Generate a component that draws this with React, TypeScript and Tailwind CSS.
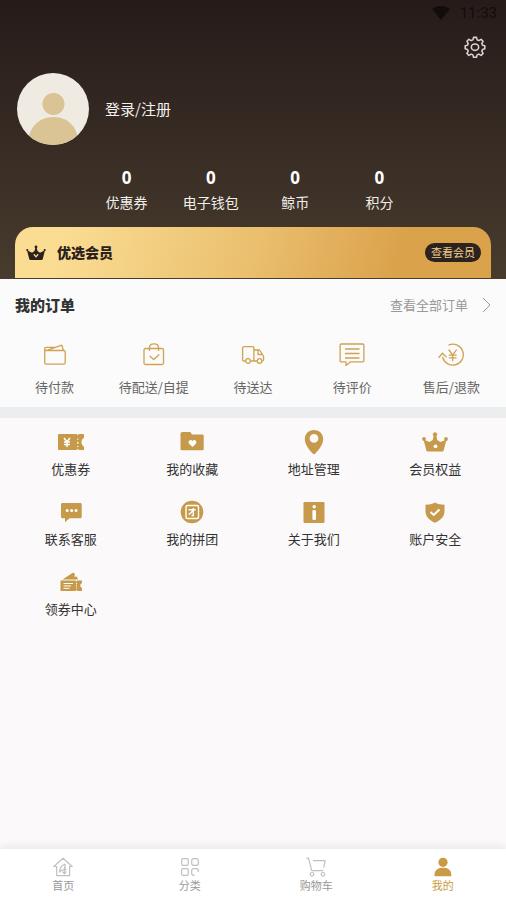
import React from 'react';

type IconProps = { className?: string };

type Entry = {
  label: string;
  icon: React.ReactNode;
};

const GearIcon: React.FC<IconProps> = ({ className }) => (
  <svg className={className} viewBox="0 0 24 24" fill="none" stroke="currentColor" strokeWidth="1.700" strokeLinejoin="round">
    <path d="M10.4 1.5h3.2l.7 2.7 1.9.8 2.4-1.4 2.2 2.2-1.4 2.4.8 1.9 2.5.6v3.2l-2.5.8-.8 1.9 1.4 2.4-2.2 2.2-2.4-1.4-1.9.8-.7 2.5h-3.2l-.7-2.5-1.9-.8-2.4 1.4L3.2 19l1.4-2.4-.8-1.9-2.5-.8v-3.2l2.5-.6.8-1.9-1.4-2.4 2.2-2.2L7.8 5l1.9-.8z" />
    <ellipse cx="12" cy="12.2" rx="4" ry="3.500" />
  </svg>
);

const CrownIcon: React.FC<IconProps> = ({ className }) => (
  <svg className={className} viewBox="0 0 26 20" fill="currentColor">
    <circle cx="13" cy="2.3" r="2.1" />
    <circle cx="2" cy="7" r="1.9" />
    <circle cx="24" cy="7" r="1.9" />
    <path d="M1.5 7.500l6 2.500L10.800 8l1.100-6h2.200l1.100 6 3.300 2 6-2.500-2.800 10.800c-.2.800-.6 1.200-1.300 1.200H5.600c-.7 0-1.100-.4-1.300-1.200z" />
    <circle cx="13.500" cy="14.300" r="1.900" fill="#fff" />
  </svg>
);

const MemberCrownIcon: React.FC<IconProps> = ({ className }) => (
  <svg className={className} viewBox="0 0 20 16" fill="currentColor">
    <circle cx="10" cy="2" r="1.400" />
    <circle cx="1.300" cy="5" r="1.100" />
    <circle cx="18.700" cy="5" r="1.100" />
    <path d="M1 5.300l5 2.400L8.500 6l1-4h1l1 4L14 7.700l5-2.400-2.300 8.900c-.2.600-.5.800-1.100.8H4.400c-.6 0-.9-.2-1.100-.8z" />
    <path d="M7.800 9.300l2.200 2.500 2.200-2.500" fill="none" stroke="#f4d48c" strokeWidth="1.300" />
  </svg>
);

const orders: Entry[] = [
  {
    label: '待付款',
    icon: (
      <svg className="h-6 w-6" viewBox="0 0 24 24" fill="none" stroke="currentColor" strokeWidth="1.300" strokeLinejoin="round">
        <path d="M1.700 6v13.700c0 1 .5 1.500 1.500 1.500h17.500c1 0 1.500-.5 1.500-1.500V9c0-1-.5-1.500-1.500-1.500H3.200c-1 0-1.500-.5-1.500-1.500s.5-1.700 1.500-1.700h9.500M4 7.300l14.800-5.100 1.600 5" />
      </svg>
    ),
  },
  {
    label: '待配送/自提',
    icon: (
      <svg className="h-6 w-6" viewBox="0 0 24 24" fill="none" stroke="currentColor" strokeWidth="1.300" strokeLinejoin="round">
        <rect x="2" y="5.500" width="19.500" height="16" rx="1.500" />
        <path d="M7.500 8V4.500C7.500 2 9 .8 12 .8s4.500 1.200 4.500 3.700V8M7.700 13l4 3.500 5.600-5" />
      </svg>
    ),
  },
  {
    label: '待送达',
    icon: (
      <svg className="h-6 w-6" viewBox="0 0 24 24" fill="none" stroke="currentColor" strokeWidth="1.300" strokeLinejoin="round">
        <path d="M4.500 18H2.800c-.8 0-1.200-.4-1.200-1.200V5c0-.9.500-1.400 1.400-1.400h8.500c.9 0 1.400.5 1.400 1.400v13H9.400M12.900 7h4.600c.8 0 1.300.3 1.700 1l3 4.500c.3.500.4.900.4 1.500v2.500c0 1-.5 1.500-1.500 1.500M16.200 18h-3.300M17 7v4.500h5" />
        <circle cx="7" cy="18" r="2.300" />
        <circle cx="18.600" cy="18" r="2.300" />
      </svg>
    ),
  },
  {
    label: '待评价',
    icon: (
      <svg className="h-6 w-[26px]" viewBox="0 0 26 24" fill="none" stroke="currentColor" strokeWidth="1.300" strokeLinejoin="round">
        <path d="M2.300 1h21.400c.7 0 1.200.5 1.200 1.200v15.400c0 .7-.5 1.200-1.200 1.200H11.500L7 22.500v-3.700H2.300c-.7 0-1.200-.5-1.200-1.200V2.200C1.100 1.500 1.600 1 2.300 1zM6 6h14.500M6 10.500h14.500M6 15h14.500" />
      </svg>
    ),
  },
  {
    label: '售后/退款',
    icon: (
      <svg className="h-6 w-[26px]" viewBox="0 0 26 24" fill="none" stroke="currentColor" strokeWidth="1.300" strokeLinecap="round" strokeLinejoin="round">
        <path d="M4.700 14.500A10.500 10.500 0 1 0 11 1.900M1 14.300l3.500-4 3.700 3.600M11 7l3.700 5.200L18.300 7M14.700 12.200v5.500M11.300 12.200h6.800M11.300 14.800h6.800" />
      </svg>
    ),
  },
];

const services: Entry[] = [
  {
    label: '优惠券',
    icon: (
      <svg className="h-6 w-[26px]" viewBox="0 0 26 24" fill="currentColor">
        <path d="M1 4h17.500l1.300 1.300L21 4h5v3.500c-2 1.500-2.500 3-2.500 4.700s.5 3 2.500 4.500V20h-5l-1.200-1.300L18.500 20H1c-.6 0-1-.4-1-1V5c0-.6.4-1 1-1z" />
        <path d="M6 8l3 3.800L12 8M9 11.800V17M6 12h6M6 14.400h6" fill="none" stroke="#fff" strokeWidth="1.500" />
        <path d="M19.800 8.500v1.200m0 2v2.200m0 2v1.200" stroke="#fff" strokeWidth="1.200" />
      </svg>
    ),
  },
  {
    label: '我的收藏',
    icon: (
      <svg className="h-6 w-6" viewBox="0 0 24 24" fill="currentColor">
        <path d="M2.500 2h7.200c.7 0 1.100.3 1.400 1l.8 1.600h10.300c1 0 1.500.5 1.500 1.500v12.600c0 1-.5 1.500-1.500 1.500H2c-1 0-1.500-.5-1.500-1.500V4c0-1.200.8-2 2-2z" />
        <path d="M12.500 17l-3.200-3.100c-2-2 .9-5.400 3.200-2.900 2.300-2.500 5.200.9 3.200 2.900z" fill="#fff" />
      </svg>
    ),
  },
  {
    label: '地址管理',
    icon: (
      <svg className="h-6 w-6" viewBox="0 0 24 24" fill="currentColor">
        <path fillRule="evenodd" d="M12 0c5.300 0 9.200 3.900 9.200 9 0 5.600-4.400 10.900-7.900 14.400-.9.900-1.700.9-2.600 0C7.200 19.900 2.800 14.600 2.800 9c0-5.100 3.900-9 9.200-9zm0 4a4.400 4.400 0 1 0 0 8.800A4.400 4.400 0 0 0 12 4z" />
      </svg>
    ),
  },
  { label: '会员权益', icon: <CrownIcon className="h-5 w-[26px]" /> },
  {
    label: '联系客服',
    icon: (
      <svg className="h-6 w-6" viewBox="0 0 24 24" fill="currentColor">
        <path d="M3.500 3h17.700c.9 0 1.500.6 1.500 1.500v12.300c0 .9-.6 1.500-1.500 1.500H10.500L6 22.300v-4H3.500c-.9 0-1.500-.6-1.500-1.500V4.500C2 3.600 2.600 3 3.500 3z" />
        <g fill="#fff">
          <circle cx="8.200" cy="10.500" r="1.500" />
          <circle cx="12.600" cy="10.500" r="1.500" />
          <circle cx="17" cy="10.500" r="1.500" />
        </g>
      </svg>
    ),
  },
  {
    label: '我的拼团',
    icon: (
      <svg className="h-6 w-6" viewBox="0 0 24 24" fill="none" stroke="#fff" strokeWidth="1.400">
        <circle cx="12" cy="12" r="11.300" fill="currentColor" stroke="none" />
        <rect x="6" y="5.500" width="12.500" height="13" rx="1.500" />
        <path d="M8.500 9.800h7.200M13.300 8v7.500h-1.800M13 10c-1 2-2.400 3.600-4.300 4.500" />
      </svg>
    ),
  },
  {
    label: '关于我们',
    icon: (
      <svg className="h-6 w-6" viewBox="0 0 24 24" fill="currentColor">
        <rect x="1.500" y="2" width="21" height="21" rx="1.300" />
        <g fill="#fff">
          <circle cx="12.200" cy="6.700" r="1.700" />
          <rect x="10.400" y="10" width="3.600" height="10" rx="1.300" />
        </g>
      </svg>
    ),
  },
  {
    label: '账户安全',
    icon: (
      <svg className="h-6 w-6" viewBox="0 0 24 24" fill="currentColor">
        <path d="M12 2.500c2.500 1.600 5.500 2.200 9.500 2.200v6.500c0 5-3.500 9-9.500 11.500-6-2.500-9.500-6.500-9.500-11.500V4.700c4 0 7-.6 9.500-2.200z" />
        <path d="M7.500 12l3.200 2.900 5.800-5.400" fill="none" stroke="#fff" strokeWidth="2" />
      </svg>
    ),
  },
  {
    label: '领券中心',
    icon: (
      <svg className="h-6 w-6" viewBox="0 0 24 24" fill="currentColor">
        <path d="M3.500 9.500l10-6.500c.7-.4 1.300-.4 1.700.3l.8 1.400-1 1.700 3 .3 1 2.800z" />
        <path d="M1.500 10.500h15l1 1.200 1-1.200H23v2.600c-1.300.8-1.700 1.600-1.700 2.500s.4 1.800 1.700 2.500V21h-4.500l-1-1.200-1 1.200h-15z" />
        <path d="M4.500 13.500h9.500M4.500 15.900h7.500M4.500 18.300h6" stroke="#fff" strokeWidth="1" />
        <path d="M17.500 13v5.500" stroke="#fff" strokeWidth="1" strokeDasharray="1.300 1" />
      </svg>
    ),
  },
];

const tabs: Entry[] = [
  {
    label: '首页',
    icon: (
      <svg className="h-5 w-5" viewBox="0 0 20 20" fill="none" stroke="currentColor" strokeWidth="1.200" strokeLinejoin="round">
        <path d="M3.700 9.500H.8L10 1.200l9.200 8.300h-2.600v9.200H3.700zM6.500 15.500c0-4 1.500-7 5.500-8.500v6M6.500 15.500c1-2.500 3.500-3 7-2.800M11.500 10v7M9.500 14.500l2 2.300 1.800-2.300" />
      </svg>
    ),
  },
  {
    label: '分类',
    icon: (
      <svg className="h-5 w-5" viewBox="0 0 20 20" fill="none" stroke="currentColor" strokeWidth="1.200">
        <rect x="1.700" y="1.700" width="6.600" height="6.600" rx="1.300" />
        <rect x="11.700" y="1.700" width="6.600" height="6.600" rx="2" />
        <rect x="1.700" y="11.700" width="6.600" height="6.600" rx="1.300" />
        <path d="M14.500 18.300h-.8c-1.300 0-2-.7-2-2v-2.600c0-1.300.7-2 2-2h2.600c1.300 0 2 .7 2 2v1.300" />
      </svg>
    ),
  },
  {
    label: '购物车',
    icon: (
      <svg className="h-5 w-5" viewBox="0 0 20 20" fill="none" stroke="currentColor" strokeWidth="1.200" strokeLinejoin="round">
        <path d="M.3 1.200h2.200l3.200 12.500h11.500M7 3.700h12.200l-1.500 7" />
        <circle cx="6" cy="17.300" r="1.800" />
        <circle cx="17" cy="17.300" r="1.800" />
      </svg>
    ),
  },
  {
    label: '我的',
    icon: (
      <svg className="h-5 w-5" viewBox="0 0 20 20" fill="currentColor">
        <circle cx="10" cy="5.300" r="4.600" />
        <path d="M1.500 19.300v-1.500c0-4.300 3-7 8.500-7s8.300 2.700 8.300 7v1.500z" />
      </svg>
    ),
  },
];

const stats = ['优惠券', '电子钱包', '鲸币', '积分'];

const StatusBar: React.FC = () => (
  <div className="flex h-[26px] items-center justify-end gap-[10px] pr-[9px] text-[#120c0a]">
    <svg className="h-4 w-[18px]" viewBox="0 0 18 16" fill="currentColor">
      <path d="M9 15L.3 4.200C2.700 2 5.600 1 9 1s6.300 1 8.700 3.200z" />
    </svg>
    <span className="font-['Roboto',sans-serif] text-[15px]">11:33</span>
  </div>
);

const Header: React.FC = () => (
  <header className="bg-linear-to-b from-[#261b19] to-[#483c2e] pb-px text-white">
    <StatusBar />
    <div className="flex h-[42px] items-center justify-end px-5">
      <button aria-label="设置" className="text-[#d8d4d0]">
        <GearIcon className="h-[22px] w-[22px]" />
      </button>
    </div>

    <a href="#login" className="mt-[5px] flex items-center gap-4 px-[17px]">
      <svg className="h-[72px] w-[72px] rounded-full bg-[#efeae2]" viewBox="0 0 72 72" fill="#dac394">
        <circle cx="36.500" cy="31" r="11" />
        <path d="M11 72c0-17 10-28 25.500-28S61.500 55 61.500 72z" />
      </svg>
      <span className="text-[15px] text-[#f3f1ef]">登录/注册</span>
    </a>

    <div className="mx-auto mt-[22px] grid w-2/3 grid-cols-4">
      {stats.map((label) => (
        <a key={label} href="#stats" className="text-center whitespace-nowrap">
          <div className="font-['Noto_Sans',sans-serif] text-[17px] leading-[22px] font-bold">0</div>
          <div className="text-[14px] leading-[26px] text-[#f0eeeb]">{label}</div>
        </a>
      ))}
    </div>

    <div className="mx-[15px] mt-[12px] flex h-[51px] items-center rounded-t-[18px] bg-linear-105 from-[#fadd93] from-10% via-[#eabf6e] via-50% to-[#dba24c] to-80% pr-[10px] pl-[11px] text-[#2b201c]">
      <MemberCrownIcon className="h-4 w-5" />
      <span className="ml-[11px] flex-1 text-[14px] font-black">优选会员</span>
      <button className="rounded-full bg-[#2c221e] px-[6px] text-[11px] leading-[19px] text-[#f0cf8b]">
        查看会员
      </button>
    </div>
  </header>
);

const Orders: React.FC = () => (
  <section className="border-b-[11px] border-[#ecedef] bg-[#fbfbfb] pb-[10px]">
    <div className="flex h-[52px] items-center justify-between px-[15px]">
      <h2 className="text-[15px] font-black text-[#333]">我的订单</h2>
      <a href="#orders" className="flex items-center gap-[14px] text-[13px] text-[#999]">
        查看全部订单
        <svg className="h-4 w-[9px]" viewBox="0 0 9 16" fill="none" stroke="currentColor">
          <path d="M1 1l7 7-7 7" />
        </svg>
      </a>
    </div>
    <div className="grid grid-cols-5 px-[5px] pt-2">
      {orders.map((item) => (
        <a key={item.label} href="#order" className="flex flex-col items-center whitespace-nowrap">
          <span className="flex h-8 items-center text-[#cfa254]">{item.icon}</span>
          <span className="mt-[6px] text-[13px] leading-[20px] text-[#666]">{item.label}</span>
        </a>
      ))}
    </div>
  </section>
);

const Services: React.FC = () => (
  <section className="grid grid-cols-4 gap-y-[21px] px-[10px] pt-3">
    {services.map((item) => (
      <a key={item.label} href="#service" className="flex flex-col items-center whitespace-nowrap">
        <span className="flex h-6 items-center text-[#c69a4a]">{item.icon}</span>
        <span className="mt-[5px] text-[13px] leading-[20px] text-[#333]">{item.label}</span>
      </a>
    ))}
  </section>
);

const TabBar: React.FC = () => (
  <nav className="sticky bottom-0 grid grid-cols-4 bg-white pt-2 pb-2 shadow-[0_-3px_8px_rgba(0,0,0,0.07)]">
    {tabs.map((item) => {
      const active = item.label === '我的';
      return (
        <a
          key={item.label}
          href="#tab"
          className={`flex flex-col items-center gap-px ${active ? 'text-[#c99b45]' : 'text-[#c0c0c0]'}`}
        >
          {item.icon}
          <span className={`text-[11px] leading-[14px] ${active ? '' : 'text-[#999]'}`}>{item.label}</span>
        </a>
      );
    })}
  </nav>
);

export default function App() {
  return (
    <div className="flex min-h-screen flex-col bg-[#fbf9fa] font-['Noto_Sans_CJK_SC',sans-serif]">
      <Header />
      <main className="flex-1">
        <Orders />
        <Services />
      </main>
      <TabBar />
    </div>
  );
}
